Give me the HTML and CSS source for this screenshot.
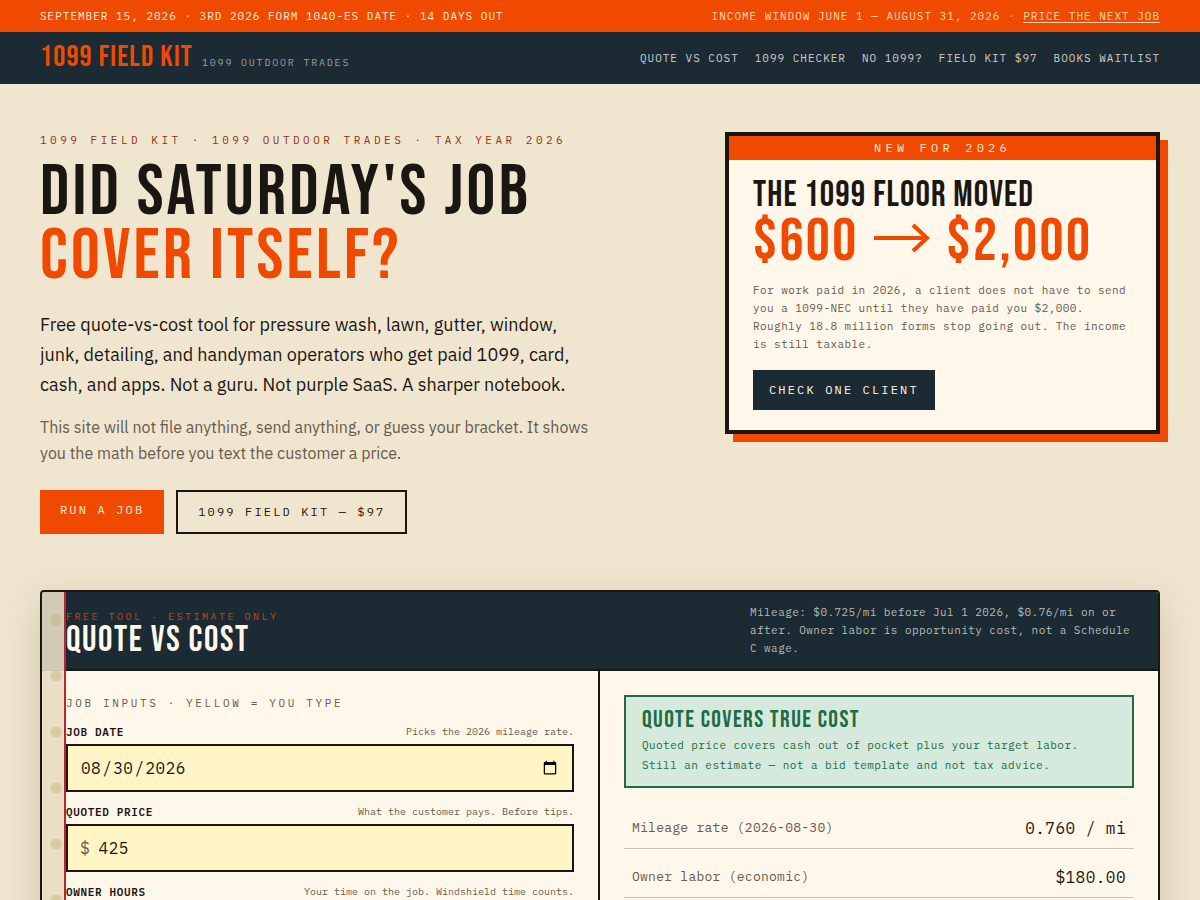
FILE: index.html
```html
<!DOCTYPE html>
<html lang="en">
<head>
<meta charset="utf-8">
<meta name="viewport" content="width=device-width, initial-scale=1">
<title>1099 Field Kit</title>
<link rel="stylesheet" href="styles.css">
</head>
<body>
<div class="deadline">
  <span>SEPTEMBER 15, 2026 · 3RD 2026 FORM 1040-ES DATE · 14 DAYS OUT</span>
  <span class="deadline-window">INCOME WINDOW JUNE 1 — AUGUST 31, 2026 · <a href="#quote">PRICE THE NEXT JOB</a></span>
</div>
<header class="site-header">
  <div class="brand">
    <a class="brand-name" href="#">1099 FIELD KIT</a>
    <span class="brand-sub">1099 OUTDOOR TRADES</span>
  </div>
  <nav class="site-nav">
    <a href="#quote">QUOTE VS COST</a>
    <a href="#checker">1099 CHECKER</a>
    <a href="#missing">NO 1099?</a>
    <a href="#kit">FIELD KIT $97</a>
    <a href="#waitlist">BOOKS WAITLIST</a>
  </nav>
</header>
<main class="page">
  <section class="hero">
    <div class="pitch">
      <p class="eyebrow">1099 FIELD KIT · 1099 OUTDOOR TRADES · TAX YEAR 2026</p>
      <h1 class="headline">DID SATURDAY'S JOB<br><span class="accent">COVER ITSELF?</span></h1>
      <p class="lead">Free quote-vs-cost tool for pressure wash, lawn, gutter, window, junk, detailing, and handyman operators who get paid 1099, card, cash, and apps. Not a guru. Not purple SaaS. A sharper notebook.</p>
      <p class="note">This site will not file anything, send anything, or guess your bracket. It shows you the math before you text the customer a price.</p>
      <div class="actions">
        <a class="btn btn-primary" href="#quote">RUN A JOB</a>
        <a class="btn btn-outline" href="#kit">1099 FIELD KIT — $97</a>
      </div>
    </div>
    <aside class="floor-card">
      <p class="floor-flag">NEW FOR 2026</p>
      <div class="floor-body">
        <h2 class="floor-title">THE 1099 FLOOR MOVED</h2>
        <p class="floor-figures"><span>$600</span>
          <svg class="arrow" viewBox="0 0 56 34" role="img" aria-label="to"><path d="M-1 13H52M38 0L52 13L38 26" fill="none" stroke="currentColor" stroke-width="4"/></svg>
          <span>$2,000</span></p>
        <p class="small-copy">For work paid in 2026, a client does not have to send you a 1099-NEC until they have paid you $2,000. Roughly 18.8 million forms stop going out. The income is still taxable.</p>
        <a class="btn btn-dark" href="#checker">CHECK ONE CLIENT</a>
      </div>
    </aside>
  </section>

  <section class="ledger" id="quote">
    <header class="ledger-head">
      <div>
        <p class="ledger-tag">FREE TOOL · ESTIMATE ONLY</p>
        <h2 class="ledger-title">QUOTE VS COST</h2>
      </div>
      <p class="small-copy ledger-note">Mileage: $0.725/mi before Jul 1 2026, $0.76/mi on or after. Owner labor is opportunity cost, not a Schedule C wage.</p>
    </header>
    <div class="ledger-body">
      <form class="inputs">
        <p class="inputs-title">JOB INPUTS · YELLOW = YOU TYPE</p>
        <div class="field">
          <div class="field-head"><label for="date">JOB DATE</label><span class="hint">Picks the 2026 mileage rate.</span></div>
          <div class="box"><input id="date" type="date" value="2026-08-30"></div>
        </div>
        <div class="field">
          <div class="field-head"><label for="price">QUOTED PRICE</label><span class="hint">What the customer pays. Before tips.</span></div>
          <div class="box"><span class="prefix">$</span><input id="price" type="text" inputmode="decimal" value="425"></div>
        </div>
        <div class="field">
          <div class="field-head"><label for="hours">OWNER HOURS</label><span class="hint">Your time on the job. Windshield time counts.</span></div>
          <div class="box"><input id="hours" type="text" inputmode="decimal"></div>
        </div>
      </form>
      <div class="results">
        <div class="verdict">
          <h3 class="verdict-title">QUOTE COVERS TRUE COST</h3>
          <p class="verdict-copy">Quoted price covers cash out of pocket plus your target labor. Still an estimate — not a bid template and not tax advice.</p>
        </div>
        <table class="breakdown">
          <tbody>
            <tr><th scope="row">Mileage rate (2026-08-30)</th><td>0.760 / mi</td></tr>
            <tr><th scope="row">Owner labor (economic)</th><td>$180.00</td></tr>
          </tbody>
        </table>
      </div>
    </div>
  </section>
</main>
</body>
</html>
```
FILE: styles.css
```css
:root {
  --orange: #f04a00;
  --navy: #1c2a33;
  --ink: #1a1612;
  --cream: #fff7ea;
  --paper: #f0e6d0;
  --muted: #655b4f;
  --green: #226b46;
  --display: "Bebas Neue", "Roboto Condensed", "Liberation Sans", sans-serif;
  --sans: "IBM Plex Sans", Roboto, "Liberation Sans", sans-serif;
  --mono: "IBM Plex Mono", "Liberation Mono", monospace;
}
*, *::before { box-sizing: border-box; }
body { margin: 0; background: var(--paper); color: var(--ink); font-family: var(--mono); }
h1, h2, h3, p { margin: 0; }
a { color: inherit; text-decoration: none; }

.deadline {
  display: flex; justify-content: space-between; flex-wrap: wrap; gap: 0 24px;
  padding: 8px 40px; background: var(--orange); color: #ffeeda;
  font-size: 11px; line-height: 16px; letter-spacing: 1px;
}
.deadline-window { color: #ffd9b5; }
.deadline a { text-decoration: underline; text-underline-offset: 2px; }

.site-header {
  display: flex; justify-content: space-between; align-items: center; flex-wrap: wrap; gap: 0 24px;
  padding: 7px 40px 9px; background: var(--navy);
}
.brand { display: flex; align-items: baseline; gap: 9px; }
.brand-name { color: var(--orange); font: 30px/36px var(--display); letter-spacing: 0.04em; }
.brand-sub { color: #9aa09f; font-size: 10px; letter-spacing: 0.18em; }
.site-nav { display: flex; flex-wrap: wrap; gap: 0 16px; padding-top: 2px; color: #ccceca; font-size: 11px; line-height: 16px; letter-spacing: 1px; }

.page { padding: 48px 40px; }
.hero { display: grid; grid-template-columns: minmax(0, 637fr) minmax(0, 435fr); gap: 48px; align-items: start; margin-bottom: 56px; }
.eyebrow { margin-bottom: 13px; color: #8f3410; font-size: 11px; line-height: 16px; letter-spacing: 0.32em; }
.headline { margin-bottom: 21px; font: 72px/64px var(--display); letter-spacing: 0.045em; }
.accent { color: var(--orange); }
.lead { max-width: 560px; margin-bottom: 14px; font: 18px/30px var(--sans); }
.note { max-width: 560px; margin-bottom: 24px; color: var(--muted); font: 16px/26px var(--sans); }
.actions { display: flex; flex-wrap: wrap; gap: 12px; }
.btn { display: inline-block; padding: 12px 20px; font-size: 12px; line-height: 16px; letter-spacing: 0.18em; }
.btn-primary { background: var(--orange); color: #ffeeda; }
.btn-outline { border: 2px solid var(--ink); }
.btn-dark { padding: 12px 16px; background: var(--navy); color: var(--cream); }

.floor-card { border: 4px solid var(--ink); background: var(--cream); box-shadow: 8px 8px 0 var(--orange); }
.floor-flag { padding: 4px; background: var(--orange); color: #ffeeda; font-size: 12px; line-height: 16px; letter-spacing: 0.35em; text-align: center; }
.floor-body { padding: 18px 24px 20px; }
.floor-title { font: 36px/36px var(--display); letter-spacing: 0.03em; }
.floor-figures { display: flex; align-items: center; gap: 16px; margin-bottom: 11px; color: var(--orange); font: 60px/56px var(--display); letter-spacing: 0.04em; }
.arrow { width: 56px; height: 34px; overflow: visible; }
.small-copy { color: var(--muted); font-size: 11px; line-height: 18px; letter-spacing: 0.04em; }
.floor-body .btn { margin-top: 17px; }

.ledger {
  position: relative; overflow: hidden; border: 2px solid var(--ink); border-radius: 4px;
  background: var(--cream); box-shadow: 0 12px 40px rgba(80, 60, 10, 0.2);
}
.ledger::before {
  content: ""; position: absolute; inset: 0 auto 0 0; width: 24px; z-index: 1;
  border-right: 2px solid #b8252b;
  background: radial-gradient(circle at 14px 28px, rgba(190, 170, 110, 0.4) 5px, transparent 6px) 0 0 / 24px 56px, rgba(231, 220, 195, 0.9);
}
.ledger-head {
  display: flex; justify-content: space-between; align-items: flex-end; gap: 24px;
  padding: 11px 24px 12px; border-bottom: 2px solid var(--ink); background: var(--navy);
}
.ledger-tag { color: #c4450f; font-size: 10px; line-height: 16px; letter-spacing: 0.25em; }
.ledger-title { color: var(--cream); font: 36px/32px var(--display); letter-spacing: 0.045em; }
.ledger-note { max-width: 384px; color: #b9bab5; }
.ledger-body { display: grid; grid-template-columns: minmax(0, 1fr) minmax(0, 1fr); }
.inputs { padding: 24px; border-right: 2px solid var(--ink); }
.inputs-title { margin-bottom: 12px; color: var(--muted); font-size: 11px; line-height: 17px; letter-spacing: 0.24em; }
.field { margin-bottom: 12px; }
.field-head { display: flex; justify-content: space-between; margin-bottom: 4px; line-height: 16px; }
.field label { font-size: 11px; font-weight: 600; letter-spacing: 0.06em; }
.hint { color: var(--muted); font-size: 10px; }
.box { display: flex; align-items: center; gap: 9px; height: 48px; padding: 0 12px; border: 2px solid var(--ink); background: #fef4c4; font-size: 16px; }
.prefix { color: var(--muted); }
.box input { flex: 1; min-width: 0; padding: 0; border: 0; background: transparent; color: var(--ink); font: 16px/24px var(--mono); letter-spacing: 0.03em; }

.results { padding: 24px; }
.verdict { margin-bottom: 12px; padding: 11px 16px; border: 2px solid var(--green); background: #d5eadc; color: var(--green); }
.verdict-title { margin-bottom: 3px; font: 24px/24px var(--display); letter-spacing: 0.06em; }
.verdict-copy { font-size: 11px; line-height: 20px; letter-spacing: 0.04em; }
.breakdown { width: 100%; border-collapse: separate; border-spacing: 0; }
.breakdown th, .breakdown td { padding: 16px 8px 8px; border-bottom: 1px solid #c9c5b4; line-height: 24px; }
.breakdown th { color: var(--muted); font-size: 13px; font-weight: normal; letter-spacing: 0.02em; text-align: left; }
.breakdown td { font-size: 16px; letter-spacing: 0.03em; text-align: right; }
```
